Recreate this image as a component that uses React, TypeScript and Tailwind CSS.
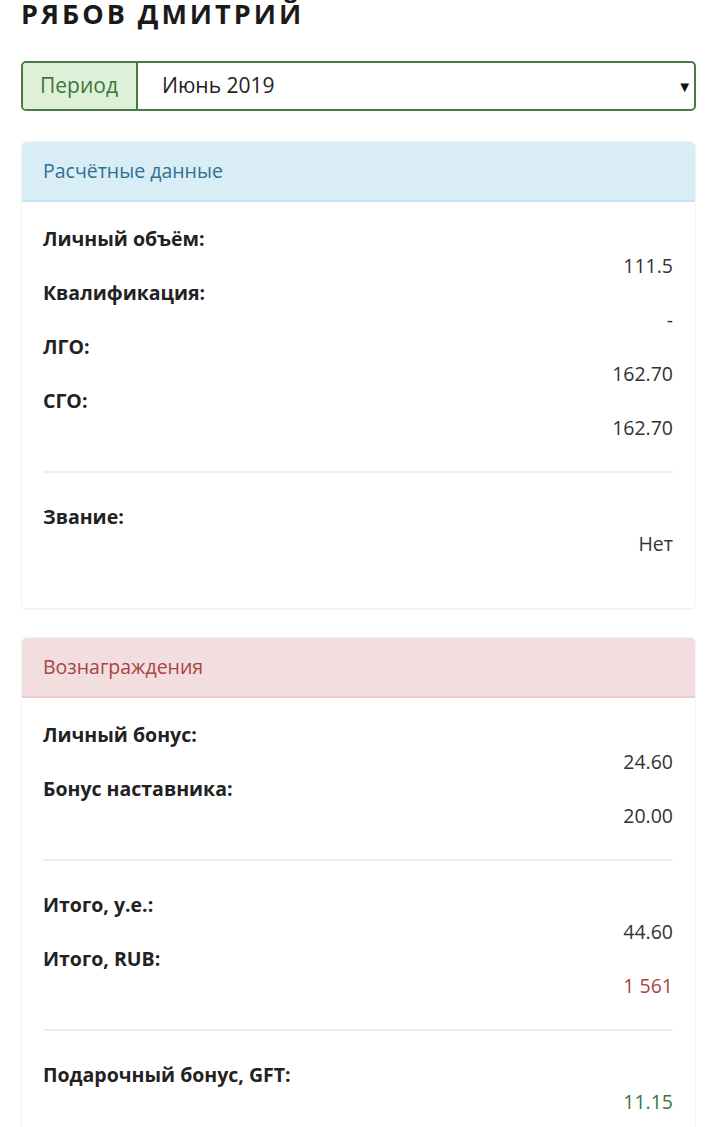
import React from 'react';

type Row = { label: string; value: string; tone?: 'red' | 'green' };

// Группы строк внутри панели, между группами — разделитель
const calcGroups: Row[][] = [
  [
    { label: 'Личный объём:', value: '111.5' },
    { label: 'Квалификация:', value: '-' },
    { label: 'ЛГО:', value: '162.70' },
    { label: 'СГО:', value: '162.70' },
  ],
  [{ label: 'Звание:', value: 'Нет' }],
];

const rewardGroups: Row[][] = [
  [
    { label: 'Личный бонус:', value: '24.60' },
    { label: 'Бонус наставника:', value: '20.00' },
  ],
  [
    { label: 'Итого, у.е.:', value: '44.60' },
    { label: 'Итого, RUB:', value: '1 561', tone: 'red' },
  ],
  [{ label: 'Подарочный бонус, GFT:', value: '11.15', tone: 'green' }],
];

const toneClass = (tone?: Row['tone']) =>
  tone === 'red' ? 'text-[#a94442]' : tone === 'green' ? 'text-[#3c763d]' : 'text-[#333333]';

const Panel: React.FC<{ title: string; variant: 'info' | 'danger'; groups: Row[][] }> = ({
  title,
  variant,
  groups,
}) => {
  const heading =
    variant === 'info'
      ? 'bg-[#d9edf7] text-[#31708f] border-[#bce8f1]'
      : 'bg-[#f2dede] text-[#a94442] border-[#ebccd1]';

  return (
    <div className="rounded-[5px] border border-[#f3f3f3] bg-white shadow-[0_1px_1px_rgba(0,0,0,0.04)]">
      <div className={`h-[60px] flex items-center px-[21px] rounded-t-[5px] border-b-2 ${heading}`}>
        {title}
      </div>
      <div className="pl-[21px] pr-[22px] pt-[23px] pb-[51px]">
        {groups.map((group, gi) => (
          <React.Fragment key={gi}>
            {gi > 0 && <div className="h-[2px] bg-[#eeeeee] mt-[30px] mb-[30px]" />}
            <dl>
              {group.map((row) => (
                <React.Fragment key={row.label}>
                  <dt className="font-bold text-[#222222] leading-[27px]">{row.label}</dt>
                  <dd className={`text-right leading-[27px] ${toneClass(row.tone)}`}>{row.value}</dd>
                </React.Fragment>
              ))}
            </dl>
          </React.Fragment>
        ))}
      </div>
    </div>
  );
};

export default function App() {
  return (
    <div className="min-h-screen bg-white px-[21px] text-[19.5px] text-[#333333] font-['Open_Sans',sans-serif]">
      <h1 className="text-[27px] leading-[28px] font-bold tracking-[3px] text-[#1a1a1a]">РЯБОВ ДМИТРИЙ</h1>

      <div className="mt-[33px] flex h-[50px] rounded-[5px] border-2 border-[#4a7a45] overflow-hidden">
        <span className="w-[115px] shrink-0 flex items-center px-[17px] bg-[#dff0d8] text-[#3c763d] text-[21px] border-r-2 border-[#4a7a45]">
          Период
        </span>
        <div className="relative flex-1 flex items-center pl-[24px] text-[21px] text-[#222222]">
          Июнь 2019
          <span className="absolute right-[2px] top-1/2 -translate-y-1/2 text-[15px] text-[#111111]">▼</span>
        </div>
      </div>

      <div className="mt-[30px] flex flex-col gap-[28px]">
        <Panel title="Расчётные данные" variant="info" groups={calcGroups} />
        <Panel title="Вознаграждения" variant="danger" groups={rewardGroups} />
      </div>
    </div>
  );
}
